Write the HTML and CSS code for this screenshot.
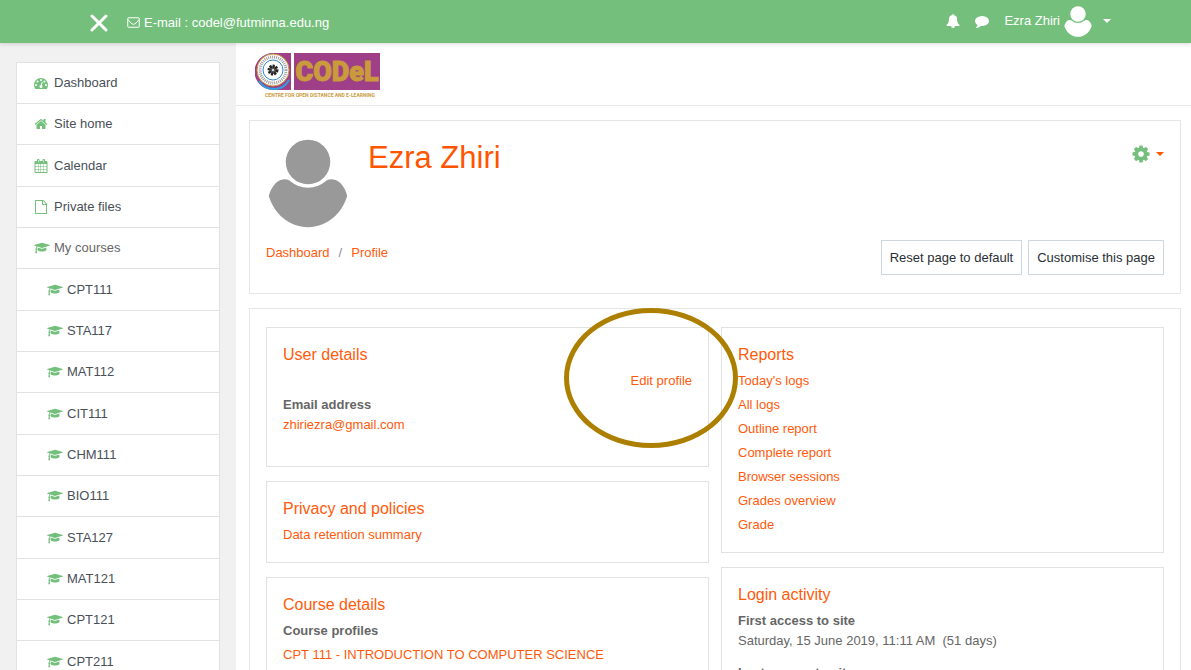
FILE: index.html
```html
<!DOCTYPE html>
<html lang="en">
<head>
<meta charset="utf-8">
<meta name="viewport" content="width=device-width, initial-scale=1">
<title>Ezra Zhiri: Public profile</title>
<link rel="stylesheet" href="styles.css">
</head>
<body>
<svg class="sprite" aria-hidden="true">
  <symbol id="cap" viewBox="0 0 2304 1792"><path d="M1774 836l18 316q4 69-82 128t-235 93.500-323 34.500-323-34.500-235-93.500-82-128l18-316 574 181q22 7 48 7t48-7zm530-324q0 23-22 31l-1120 352q-4 1-10 1t-10-1l-652-206q-43 34-71 111.500t-34 178.500q63 36 63 109 0 69-58 107l58 433q2 14-8 25-9 11-24 11h-192q-15 0-24-11-10-11-8-25l58-433q-58-38-58-107 0-73 65-111 11-207 98-330l-333-104q-22-8-22-31t22-31l1120-352q4-1 10-1t10 1l1120 352q22 8 22 31z"/></symbol>
  <symbol id="person" viewBox="0 0 240 268"><circle cx="120" cy="69" r="67"/><path d="M2 172C8 147 25 124 44 122Q54 120 64 125Q90 147 120 147T176 125Q186 120 196 122C216 124 233 147 238 172C222 226 176 266 120 266S18 226 2 172z"/></symbol>
</svg>

<header class="topbar">
  <div class="topbar-left">
    <button class="plain" type="button" aria-label="Close side panel"><svg class="close" viewBox="0 0 18 18"><path d="M2 2l14 14M16 2L2 16"/></svg></button>
    <a class="contact" href="mailto:codel@futminna.edu.ng"><svg class="mail" viewBox="0 0 26 22"><path d="M3 1.500h20q1.500 0 1.500 1.500v16q0 1.500-1.500 1.500H3q-1.500 0-1.500-1.500V3Q1.500 1.500 3 1.500zM2 5q3 5 8 8.500 3 2.500 6 0Q21 10 24 5"/></svg>E-mail : codel@futminna.edu.ng</a>
  </div>
  <nav class="topbar-right" aria-label="User">
    <button class="plain" type="button" aria-label="Notifications"><svg class="icon" viewBox="0 0 1792 1792"><path d="M912 1696q0-16-16-16-59 0-101.500-42.500t-42.500-101.500q0-16-16-16t-16 16q0 73 51.500 124.500t124.500 51.500q16 0 16-16zm816-288q0 52-38 90t-90 38h-448q0 106-75 181t-181 75-181-75-75-181h-448q-52 0-90-38t-38-90q50-42 91-88t85-119.500 74.500-158.500 50-206 19.500-260q0-152 117-282.500t307-158.500q-8-19-8-39 0-40 28-68t68-28 68 28 28 68q0 20-8 39 190 28 307 158.500t117 282.500q0 139 19.500 260t50 206 74.500 158.500 85 119.500 91 88z"/></svg></button>
    <button class="plain" type="button" aria-label="Messages"><svg class="icon" viewBox="0 0 1792 1792"><path d="M1792 896q0 174-120 321.500t-326 233-450 85.500q-70 0-145-8-198 175-460 242-49 14-114 22-17 2-30.500-9t-17.500-29v-1q-3-4-.5-12t2-10 4.500-9.500l6-9 7-8.500 8-9q7-8 31-34.500t34.500-38 31-39.500 32.500-51 27-59 26-76q-157-89-247.500-220t-90.500-281q0-130 71-248.500t191-204.500 286-136.500 348-50.500q244 0 450 85.500t326 233 120 321.500z"/></svg></button>
    <button class="plain user-menu" type="button">Ezra Zhiri<svg class="avatar-small"><use href="#person"/></svg><span class="caret"></span></button>
  </nav>
</header>

<div class="layout">
  <nav class="sidebar" aria-label="Side panel">
    <ul class="menu">
      <li><a href="#"><svg class="icon" viewBox="0 0 1792 1792"><path d="M384 1152q0-53-37.500-90.500t-90.500-37.500-90.500 37.500-37.500 90.500 37.500 90.500 90.500 37.500 90.500-37.500 37.500-90.500zm192-448q0-53-37.500-90.500t-90.500-37.500-90.500 37.500-37.500 90.500 37.500 90.500 90.500 37.500 90.500-37.500 37.500-90.500zm428 481l101-382q6-26-7.500-48.500t-38.500-29.500-48 6.500-30 39.500l-101 382q-60 5-107 43.500t-63 98.500q-20 77 20 146t117 89 146-20 89-117q16-60-6-117t-72-91zm660-33q0-53-37.500-90.500t-90.500-37.500-90.500 37.500-37.500 90.500 37.500 90.500 90.500 37.500 90.500-37.500 37.500-90.500zm-640-640q0-53-37.500-90.500t-90.500-37.500-90.500 37.500-37.500 90.500 37.500 90.500 90.500 37.500 90.500-37.500 37.500-90.500zm448 192q0-53-37.500-90.500t-90.500-37.500-90.500 37.500-37.500 90.500 37.500 90.500 90.500 37.500 90.500-37.500 37.500-90.500zm320 448q0 261-141 483-19 29-54 29h-1402q-35 0-54-29-141-221-141-483 0-182 71-348t191-286 286-191 348-71 348 71 286 191 191 286 71 348z"/></svg>Dashboard</a></li>
      <li><a href="#"><svg class="icon" viewBox="0 0 1792 1792"><path d="M1472 992v480q0 26-19 45t-45 19h-384v-384h-256v384h-384q-26 0-45-19t-19-45v-480q0-1 .5-3t.5-3l575-474 575 474q1 2 1 6zm223-69l-62 74q-8 9-21 11h-3q-13 0-21-7l-692-577-692 577q-12 8-24 7-13-2-21-11l-62-74q-8-10-7-23.500t11-21.500l719-599q32-26 76-26t76 26l244 204v-195q0-14 9-23t23-9h192q14 0 23 9t9 23v408l219 182q10 8 11 21.500t-7 23.500z"/></svg>Site home</a></li>
      <li><a href="#"><svg class="icon" viewBox="0 0 26 28"><path fill-rule="evenodd" d="M2 4h3V2q0-2 2-2h1q2 0 2 2v2h6V2q0-2 2-2h1q2 0 2 2v2h3q2 0 2 2v20q0 2-2 2H2q-2 0-2-2V6q0-2 2-2zM2 10v4h5v-4zM8 10v4h4v-4zM13 10v4h5v-4zM19 10v4h5v-4zM2 15v5h5v-5zM8 15v5h4v-5zM13 15v5h5v-5zM19 15v5h5v-5zM2 21v5h5v-5zM8 21v5h4v-5zM13 21v5h5v-5zM19 21v5h5v-5zM7 2v5h1V2zM18 2v5h1V2z"/></svg>Calendar</a></li>
      <li><a href="#"><svg class="icon" viewBox="0 0 1792 1792"><path d="M1596 380q28 28 48 76t20 88v1152q0 40-28 68t-68 28h-1344q-40 0-68-28t-28-68v-1600q0-40 28-68t68-28h896q40 0 88 20t76 48zm-444-244v376h376q-10-29-22-41l-313-313q-12-12-41-22zm384 1528v-1024h-416q-40 0-68-28t-28-68v-416h-768v1536h1280z"/></svg>Private files</a></li>
      <li><span class="menu-label"><svg class="icon cap"><use href="#cap"/></svg>My courses</span></li>
      <li class="course"><a href="#"><svg class="icon cap"><use href="#cap"/></svg>CPT111</a></li>
      <li class="course"><a href="#"><svg class="icon cap"><use href="#cap"/></svg>STA117</a></li>
      <li class="course"><a href="#"><svg class="icon cap"><use href="#cap"/></svg>MAT112</a></li>
      <li class="course"><a href="#"><svg class="icon cap"><use href="#cap"/></svg>CIT111</a></li>
      <li class="course"><a href="#"><svg class="icon cap"><use href="#cap"/></svg>CHM111</a></li>
      <li class="course"><a href="#"><svg class="icon cap"><use href="#cap"/></svg>BIO111</a></li>
      <li class="course"><a href="#"><svg class="icon cap"><use href="#cap"/></svg>STA127</a></li>
      <li class="course"><a href="#"><svg class="icon cap"><use href="#cap"/></svg>MAT121</a></li>
      <li class="course"><a href="#"><svg class="icon cap"><use href="#cap"/></svg>CPT121</a></li>
      <li class="course"><a href="#"><svg class="icon cap"><use href="#cap"/></svg>CPT211</a></li>
    </ul>
  </nav>

  <main class="main">
    <div class="brand">
      <a href="#" aria-label="CODeL home"><svg class="logo" viewBox="0 0 128 48">
        <path fill="#9e3f87" d="M18 1h18v37H18A18 18 0 0 1 18 1zM39 1h86v37H39z"/>
        <path fill="none" stroke="#2f9fe0" stroke-width="2" d="M4 29Q9 37 19 37T34 28"/>
        <circle cx="18" cy="18" r="16" fill="#fff" stroke="#c99b3d" stroke-width="1"/>
        <circle cx="18" cy="18" r="13" fill="none" stroke="#999" stroke-width="3" stroke-dasharray="1 1"/>
        <circle cx="18" cy="18" r="10" fill="#fff" stroke="#3087cf" stroke-width="1"/>
        <circle cx="18" cy="18" r="4" fill="#555" stroke="#222" stroke-width="3" stroke-dasharray="2 1"/>
        <circle cx="18" cy="18" r="1" fill="#fff"/>
        <text class="logo-name" x="82" y="29">CODeL</text>
        <text class="logo-tag" x="65" y="45">CENTRE FOR OPEN DISTANCE AND E-LEARNING</text>
      </svg></a>
    </div>

    <section class="card page-header">
      <div class="identity">
        <svg class="avatar"><use href="#person"/></svg>
        <h1>Ezra Zhiri</h1>
        <button class="plain settings" type="button" aria-label="Actions menu"><svg class="cog" viewBox="0 0 1792 1792"><path d="M1152 896q0-106-75-181t-181-75-181 75-75 181 75 181 181 75 181-75 75-181zm512-109v222q0 12-8 23t-20 13l-185 28q-19 54-39 91 35 50 107 138 10 12 10 25t-9 23q-27 37-99 108t-94 71q-12 0-26-9l-138-108q-44 23-91 38-16 136-29 186-7 28-36 28h-222q-14 0-24.500-8.500t-11.500-21.500l-28-184q-49-16-90-37l-141 107q-10 9-25 9-14 0-25-11-126-114-165-168-7-10-7-23 0-12 8-23 15-21 51-66.500t54-70.500q-27-50-41-99l-183-27q-13-2-21-12.500t-8-23.500v-222q0-12 8-23t19-13l186-28q14-46 39-92-40-57-107-138-10-12-10-24 0-10 9-23 26-36 98.500-107.500t94.500-71.500q13 0 26 10l138 107q44-23 91-38 16-136 29-186 7-28 36-28h222q14 0 24.500 8.500t11.500 21.500l28 184q49 16 90 37l142-107q9-9 24-9 13 0 25 10 129 119 165 170 7 8 7 22 0 12-8 23-15 21-51 66.500t-54 70.500q26 50 41 98l183 28q13 2 21 12.500t8 23.500z"/></svg><span class="caret"></span></button>
      </div>
      <div class="page-nav">
        <nav class="crumbs" aria-label="Breadcrumb"><a href="#">Dashboard</a><span>/</span><a href="#">Profile</a></nav>
        <div class="actions"><button class="btn" type="button">Reset page to default</button><button class="btn" type="button">Customise this page</button></div>
      </div>
    </section>

    <div class="card columns">
      <div class="column">
        <section class="block user-details">
          <h2>User details</h2>
          <a class="edit" href="#">Edit profile</a>
          <dl><dt>Email address</dt><dd><a href="mailto:zhiriezra@gmail.com">zhiriezra@gmail.com</a></dd></dl>
          <span class="highlight"></span>
        </section>
        <section class="block">
          <h2>Privacy and policies</h2>
          <ul class="links"><li><a href="#">Data retention summary</a></li></ul>
        </section>
        <section class="block">
          <h2>Course details</h2>
          <h3>Course profiles</h3>
          <ul class="links"><li><a href="#">CPT 111 - INTRODUCTION TO COMPUTER SCIENCE</a></li></ul>
        </section>
      </div>
      <div class="column">
        <section class="block">
          <h2>Reports</h2>
          <ul class="links">
            <li><a href="#">Today's logs</a></li>
            <li><a href="#">All logs</a></li>
            <li><a href="#">Outline report</a></li>
            <li><a href="#">Complete report</a></li>
            <li><a href="#">Browser sessions</a></li>
            <li><a href="#">Grades overview</a></li>
            <li><a href="#">Grade</a></li>
          </ul>
        </section>
        <section class="block">
          <h2>Login activity</h2>
          <dl><dt>First access to site</dt><dd>Saturday, 15 June 2019, 11:11 AM&nbsp; (51 days)</dd><dt>Last access to site</dt></dl>
        </section>
      </div>
    </div>
  </main>
</div>
</body>
</html>
```

FILE: styles.css
```css
* { box-sizing: border-box; }
html, body { height: 100%; }
body {
  margin: 0;
  display: flex;
  flex-direction: column;
  overflow: hidden;
  background: #f1f1f1;
  color: #666;
  font: 13px/20px "Liberation Sans", Arial, sans-serif;
}
h1, h2, h3, ul, dl, dd { margin: 0; padding: 0; }
ul { list-style: none; }
a { color: #ff5a0a; text-decoration: none; }
svg { display: block; flex: none; }
.sprite { position: absolute; width: 0; height: 0; }
.plain { display: flex; align-items: center; padding: 0; border: 0; background: none; color: inherit; font: inherit; }
.icon { width: 14px; height: 14px; fill: currentColor; }
.caret { border: 4px solid transparent; border-top-color: currentColor; border-bottom: 0; }

.topbar {
  position: relative;
  flex: none;
  display: flex;
  justify-content: space-between;
  height: 43px;
  padding: 0 80px 0 90px;
  background: #75bf7d;
  color: #fff;
  box-shadow: 0 1px 4px rgba(0, 0, 0, 0.15);
}
.topbar-left { display: flex; align-items: center; gap: 19px; padding-top: 2px; }
.close { width: 18px; height: 18px; fill: none; stroke: #fff; stroke-width: 3; stroke-linecap: round; }
.contact { display: flex; align-items: center; gap: 4px; color: #fff; }
.mail { width: 13px; height: 11px; fill: none; stroke: #fff; stroke-width: 2; }
.topbar-right { display: flex; align-items: center; gap: 15px; padding-bottom: 2px; }
.user-menu { gap: 4px; }
.avatar-small { width: 28px; height: 32px; fill: #fff; padding-top: 1px; }
.user-menu .caret { margin-left: 7px; }

.layout { flex: 1; display: flex; min-height: 0; }
.sidebar { flex: none; width: 236px; padding: 19px 16px 0; overflow: hidden; }
.menu { border: 1px solid #e0e2e3; background: #fff; }
.menu li { border-bottom: 1px solid #e0e2e3; }
.menu a, .menu-label { display: flex; align-items: center; gap: 6px; height: 40px; padding-left: 17px; }
.menu li:nth-child(3n) a { height: 41px; }
.menu a { color: #495057; }
.menu .icon { color: #75bf7d; }
.menu .icon.cap { width: 16px; margin-right: -2px; }
.menu .course a { padding-left: 30px; }

.main { flex: 1; min-width: 0; padding-bottom: 20px; background: #fff; overflow: hidden; }
.brand { height: 63px; padding: 9px 19px 0; border-bottom: 1px solid #e9e9e9; }
.brand a { display: inline-block; }
.logo { width: 128px; height: 48px; }
.logo-name { fill: #c99b3d; stroke: #c99b3d; stroke-width: 1; font: 900 27px Roboto, sans-serif; text-anchor: middle; }
.logo-tag { fill: #c99b3d; font: bold 5px Roboto, sans-serif; text-anchor: middle; }

.card { margin: 14px 10px 0 13px; padding: 18px 16px; border: 1px solid #e6e6e6; }
.identity { display: flex; align-items: flex-start; padding-left: 2px; }
.avatar { width: 80px; height: 89px; fill: #999; }
.identity h1 { margin-left: 20px; color: #ff5400; font-size: 31px; line-height: 38px; font-weight: 400; }
.settings { gap: 5px; margin-left: auto; height: 30px; color: #ff5400; }
.cog { width: 20px; height: 20px; fill: #75bf7d; }
.page-nav { display: flex; justify-content: space-between; margin-top: 12px; }
.crumbs { display: flex; gap: 9px; padding-top: 3px; }
.crumbs span { color: #868e96; }
.actions { display: flex; gap: 6px; }
.btn { height: 35px; padding: 0 8px; border: 1px solid #ced7df; background: #fff; color: #292f34; font: inherit; }

.columns { display: grid; grid-template-columns: 1fr 1fr; gap: 12px; align-items: start; }
.column { display: grid; gap: 14px; }
.block { padding: 17px 16px 15px; border: 1px solid #e2e2e2; }
.block h2 { margin-bottom: 4px; color: #ff5a0a; font-size: 16px; line-height: 20px; font-weight: 400; }
.block h3, .block dt { font-size: 13px; line-height: 24px; font-weight: 700; }
.block dd { margin-bottom: 12px; line-height: 16px; }
.links li { line-height: 24px; }
.user-details { position: relative; padding-bottom: 21px; }
.edit { display: block; line-height: 24px; text-align: right; }
.highlight {
  position: absolute;
  top: -20px;
  right: -30px;
  width: 174px;
  height: 140px;
  border: 5px solid #ad7f00;
  border-radius: 50%;
  pointer-events: none;
}
```
